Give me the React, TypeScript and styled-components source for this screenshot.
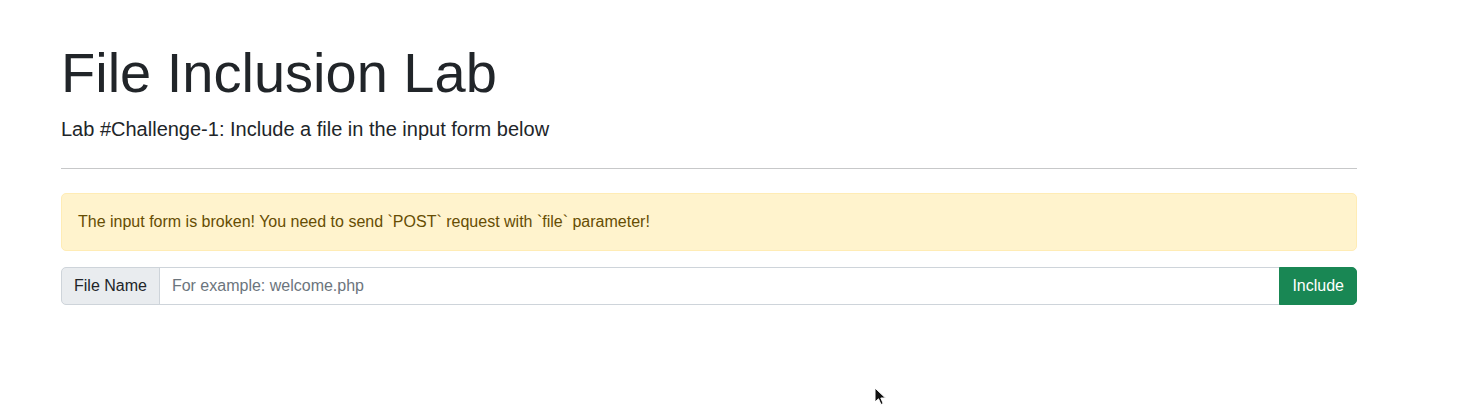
import React from "react";
import styled, { createGlobalStyle } from "styled-components";

const Global = createGlobalStyle`
  * { box-sizing: border-box; }
  html, body { margin: 0; padding: 0; background: #fff; }
  body {
    font-family: "Liberation Sans", Arial, sans-serif;
    font-size: 16px;
    line-height: 1.5;
    color: #212529;
  }
`;

const Page = styled.div`
  position: relative;
  min-height: 411px;
  padding: 39px 0 0 61px;
`;

const Container = styled.div`
  width: 1296px;
`;

const Title = styled.h1`
  margin: 0 0 8px;
  font-size: 56px;
  font-weight: 400;
  line-height: 1.2;
`;

const Lead = styled.p`
  margin: 0;
  font-size: 20px;
  line-height: 1.5;
`;

const Rule = styled.hr`
  margin: 24px 0;
  border: 0;
  border-top: 1px solid rgba(33, 37, 41, 0.25);
`;

const Alert = styled.div`
  padding: 16px;
  margin-bottom: 16px;
  border: 1px solid #ffecb5;
  border-radius: 5px;
  background: #fff3cd;
  color: #664d03;
`;

const InputGroup = styled.form`
  display: flex;
  align-items: stretch;
  width: 100%;
`;

const Addon = styled.span`
  display: flex;
  align-items: center;
  padding: 6px 12px;
  background: #e9ecef;
  border: 1px solid #ced4da;
  border-radius: 5px 0 0 5px;
  color: #212529;
  white-space: nowrap;
`;

const Field = styled.input`
  flex: 1 1 auto;
  min-width: 0;
  padding: 6px 12px;
  margin-left: -1px;
  border: 1px solid #ced4da;
  border-radius: 0;
  font: inherit;
  line-height: 1.5;
  color: #212529;
  outline: none;
  &::placeholder { color: #6c757d; }
`;

const Button = styled.button`
  padding: 6px 12px;
  margin-left: -1px;
  border: 1px solid #198754;
  border-radius: 0 5px 5px 0;
  background: #198754;
  color: #fff;
  font: inherit;
  line-height: 1.5;
  cursor: pointer;
`;

const Cursor = styled.svg`
  position: absolute;
  left: 874px;
  top: 387px;
`;

export default function App() {
  return (
    <>
      <Global />
      <Page>
        <Container>
          <Title>File Inclusion Lab</Title>
          <Lead>Lab #Challenge-1: Include a file in the input form below</Lead>
          <Rule />
          <Alert>The input form is broken! You need to send `POST` request with `file` parameter!</Alert>
          <InputGroup onSubmit={(e) => e.preventDefault()}>
            <Addon>File Name</Addon>
            <Field placeholder="For example: welcome.php" />
            <Button type="submit">Include</Button>
          </InputGroup>
        </Container>
        <Cursor width="14" height="20" viewBox="0 0 14 20">
          <path d="M1 1 L1 15 L4.5 11.8 L7 17.5 L9.2 16.5 L6.8 11 L11.5 11 Z" fill="#111" stroke="#fff" strokeWidth="1" />
        </Cursor>
      </Page>
    </>
  );
}
